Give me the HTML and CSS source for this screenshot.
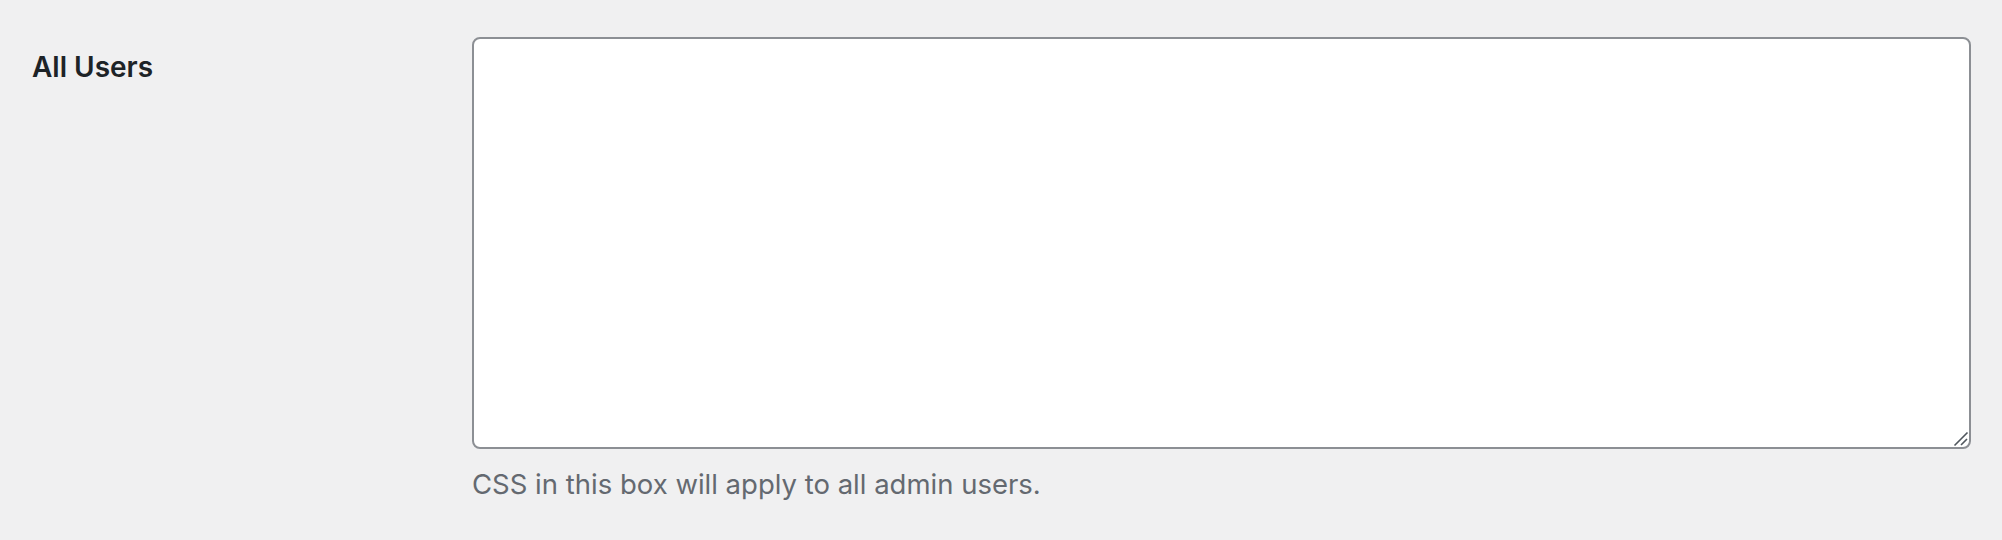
FILE: index.html
```html
<!DOCTYPE html>
<html lang="en">
<head>
    <meta charset="UTF-8">
    <meta name="viewport" content="width=device-width, initial-scale=1.0">
    <title>Admin CSS</title>
    <link rel="stylesheet" href="styles.css">
</head>
<body>
    <div class="form-row">
        <div class="label-col">
            <label for="allUsersCss">All Users</label>
        </div>
        <div class="field-col">
            <div class="box-wrap">
                <textarea id="allUsersCss" class="css-box"></textarea>
                <svg class="resize-grip" width="16" height="16" viewBox="0 0 16 16">
                    <path d="M1.5 14.5 L14.5 1.5 M8 14 L14 8" stroke="#50575e" stroke-width="1.6" fill="none"/>
                </svg>
            </div>
            <p class="description">CSS in this box will apply to all admin users.</p>
        </div>
    </div>
</body>
</html>
```

FILE: styles.css
```css
body {
    font-family: Inter, "Noto Sans", sans-serif;
    margin: 0;
    background-color: #f0f0f1;
    color: #1d2327;
}

.form-row {
    display: flex;
    padding: 37px 0 0 32px;
}

.label-col {
    width: 440px;
    padding-top: 12px;
    font-size: 28px;
    font-weight: 600;
    line-height: 1.3;
}

.field-col {
    width: 1499px;
}

.box-wrap {
    position: relative;
}

.css-box {
    display: block;
    width: 100%;
    height: 412px;
    box-sizing: border-box;
    margin: 0;
    padding: 8px 16px;
    border: 2px solid #8c8f94;
    border-radius: 8px;
    background-color: #fff;
    resize: none;
}

.resize-grip {
    position: absolute;
    right: 2px;
    bottom: 2px;
    pointer-events: none;
}

.description {
    margin: 15px 0 0;
    font-size: 27.5px;
    line-height: 1.5;
    color: #646970;
}
```
